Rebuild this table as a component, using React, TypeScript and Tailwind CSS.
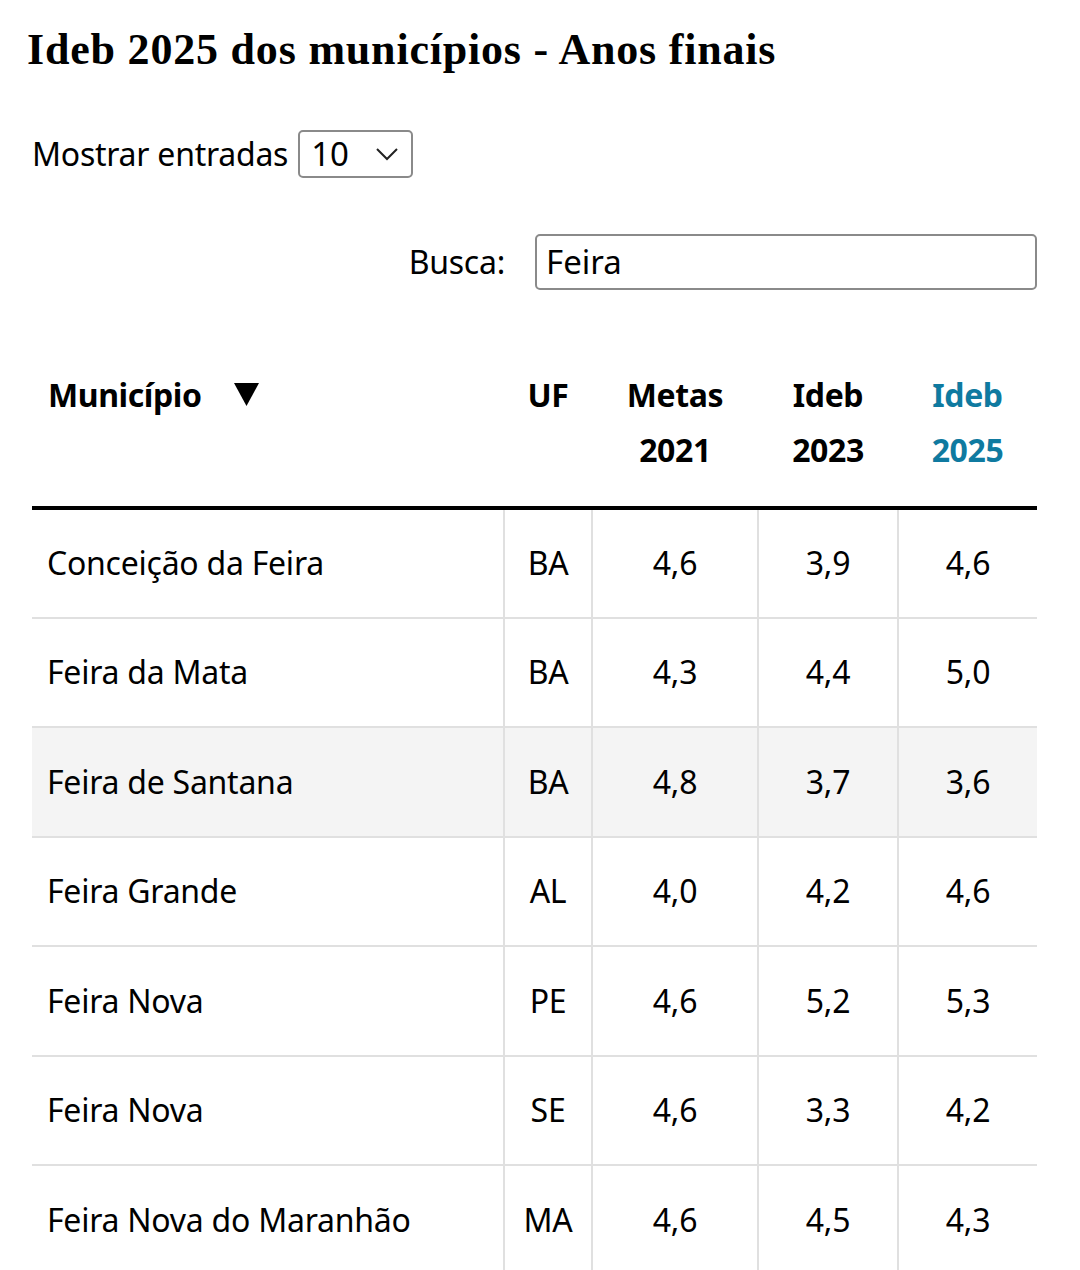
import React from "react";

const rows = [
  ["Conceição da Feira", "BA", "4,6", "3,9", "4,6"],
  ["Feira da Mata", "BA", "4,3", "4,4", "5,0"],
  ["Feira de Santana", "BA", "4,8", "3,7", "3,6"],
  ["Feira Grande", "AL", "4,0", "4,2", "4,6"],
  ["Feira Nova", "PE", "4,6", "5,2", "5,3"],
  ["Feira Nova", "SE", "4,6", "3,3", "4,2"],
  ["Feira Nova do Maranhão", "MA", "4,6", "4,5", "4,3"],
];

export default function App() {
  const cond = { fontFamily: '"Noto Sans", "Open Sans", sans-serif', fontStretch: "condensed" as const };
  return (
    <div className="w-[1080px] h-[1270px] overflow-hidden bg-white text-black pl-[32px] pr-[43px]">
      <h1
        className="pt-[22px] text-[44px] leading-[56px] font-bold tracking-[0.8px] -ml-[5px]"
        style={{ fontFamily: '"Liberation Serif", "DejaVu Serif", serif' }}
      >
        Ideb 2025 dos municípios - Anos finais
      </h1>
      <div className="mt-[52px] flex items-center gap-[10px]" style={cond}>
        <span className="text-[32px] leading-[48px] tracking-[-0.25px]">Mostrar entradas</span>
        <div
          className="w-[115px] h-[48px] border-2 border-[#8a8a8a] rounded-[5px] flex items-center justify-between pl-[11px] pr-[12px] text-[33px]"
          style={{ fontFamily: '"Noto Sans", sans-serif' }}
        >
          <span>10</span>
          <svg width="24" height="14" viewBox="0 0 24 14" fill="none" stroke="#222" strokeWidth="2">
            <path d="M2 2 L12 12 L22 2" />
          </svg>
        </div>
      </div>
      <div className="mt-[56px] flex items-center justify-end gap-[30px]">
        <span className="text-[32px] leading-[48px] tracking-[-0.25px]" style={cond}>Busca:</span>
        <div
          className="w-[502px] h-[56px] border-2 border-[#8a8a8a] rounded-[5px] flex items-center pl-[9px] text-[33px]"
          style={{ fontFamily: '"Noto Sans", sans-serif' }}
        >
          Feira
        </div>
      </div>
      <table className="mt-[50px] w-full border-collapse" style={cond}>
        <colgroup>
          <col style={{ width: 472 }} />
          <col style={{ width: 88 }} />
          <col style={{ width: 166 }} />
          <col style={{ width: 140 }} />
          <col style={{ width: 139 }} />
        </colgroup>
        <thead>
          <tr className="border-b-[4px] border-black">
            <th className="text-left align-top pl-[16px] pt-[27px] pb-[29px] text-[32px] leading-[55px] font-bold tracking-[-0.4px]">
              <span className="inline-flex items-center">
                Município
                <svg className="ml-[32px]" width="25" height="23" viewBox="0 0 25 23">
                  <polygon points="0,0 25,0 12.5,23" fill="#000" />
                </svg>
              </span>
            </th>
            <th className="align-top pt-[27px] pb-[29px] text-[32px] leading-[55px] font-bold tracking-[-0.4px]">UF</th>
            <th className="align-top pt-[27px] pb-[29px] text-[32px] leading-[55px] font-bold tracking-[-0.4px]">
              Metas<br />2021
            </th>
            <th className="align-top pt-[27px] pb-[29px] text-[32px] leading-[55px] font-bold tracking-[-0.4px]">
              Ideb<br />2023
            </th>
            <th className="align-top pt-[27px] pb-[29px] text-[32px] leading-[55px] font-bold tracking-[-0.4px] text-[#0f7aa0]">
              Ideb<br />2025
            </th>
          </tr>
        </thead>
        <tbody>
          {rows.map((r, i) => (
            <tr key={i} className={`border-b-2 border-[#e0e0e0] ${i === 2 ? "bg-[#f4f4f4]" : ""}`}>
              <td className="h-[109.5px] pl-[15px] text-[32px] tracking-[-0.25px] border-r-2 border-[#e0e0e0]">{r[0]}</td>
              <td className="text-center text-[32px] tracking-[-0.25px] border-r-2 border-[#e0e0e0]">{r[1]}</td>
              <td className="text-center text-[32px] tracking-[-0.25px] border-r-2 border-[#e0e0e0]">{r[2]}</td>
              <td className="text-center text-[32px] tracking-[-0.25px] border-r-2 border-[#e0e0e0]">{r[3]}</td>
              <td className="text-center text-[32px] tracking-[-0.25px]">{r[4]}</td>
            </tr>
          ))}
        </tbody>
      </table>
    </div>
  );
}
